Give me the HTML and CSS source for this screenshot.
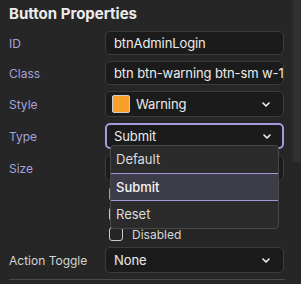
FILE: index.html
```html
<!DOCTYPE html>
<html lang="en">
<head>
    <meta charset="UTF-8">
    <title>Button Properties</title>
    <link rel="stylesheet" href="styles.css">
</head>
<body>
    <div class="panel">
        <h2 class="panel-title">Button Properties</h2>
        <div class="prop-row">
            <label class="prop-label">ID</label>
            <div class="field">btnAdminLogin</div>
        </div>
        <div class="prop-row">
            <label class="prop-label">Class</label>
            <div class="field">btn btn-warning btn-sm w-100</div>
        </div>
        <div class="prop-row">
            <label class="prop-label">Style</label>
            <div class="field select">
                <span class="swatch"></span>
                <span class="select-text">Warning</span>
                <svg class="chevron" width="8" height="5" viewBox="0 0 8 5"><path d="M1 1l3 3 3-3" fill="none" stroke="#f0f0f0" stroke-width="1.6" stroke-linecap="round" stroke-linejoin="round"/></svg>
            </div>
        </div>
        <div class="prop-row">
            <label class="prop-label">Type</label>
            <div class="select-wrap">
                <div class="field select focused">
                    <span class="select-text">Submit</span>
                    <svg class="chevron" width="8" height="5" viewBox="0 0 8 5"><path d="M1 1l3 3 3-3" fill="none" stroke="#f0f0f0" stroke-width="1.6" stroke-linecap="round" stroke-linejoin="round"/></svg>
                </div>
                <ul class="menu">
                    <li class="menu-item">Default</li>
                    <li class="menu-item active">Submit</li>
                    <li class="menu-item">Reset</li>
                </ul>
            </div>
        </div>
        <div class="prop-row">
            <label class="prop-label">Size</label>
            <div class="field select">
                <span class="select-text">Small</span>
                <svg class="chevron" width="8" height="5" viewBox="0 0 8 5"><path d="M1 1l3 3 3-3" fill="none" stroke="#f0f0f0" stroke-width="1.6" stroke-linecap="round" stroke-linejoin="round"/></svg>
            </div>
        </div>
        <div class="checks">
            <div class="check"><span class="box checked"></span>Full width</div>
            <div class="check"><span class="box"></span>Outline</div>
            <div class="check"><span class="box"></span>Disabled</div>
        </div>
        <div class="prop-row">
            <label class="prop-label plain">Action Toggle</label>
            <div class="field select">
                <span class="select-text">None</span>
                <svg class="chevron" width="8" height="5" viewBox="0 0 8 5"><path d="M1 1l3 3 3-3" fill="none" stroke="#f0f0f0" stroke-width="1.6" stroke-linecap="round" stroke-linejoin="round"/></svg>
            </div>
        </div>
        <div class="divider"></div>
    </div>
    <div class="scroll-track"><div class="scroll-thumb"></div></div>
</body>
</html>
```

FILE: styles.css
```css
body {
    margin: 0;
    height: 284px;
    overflow: hidden;
    display: flex;
    background: #262626;
    font-family: Inter, "Noto Sans", sans-serif;
    color: #e6e6e6;
}

.panel {
    flex: 1;
    padding: 4px 9px 0 9px;
    display: flex;
    flex-direction: column;
    gap: 6px;
}

.panel-title {
    margin: 0 0 1px;
    font-size: 15px;
    line-height: 20px;
    font-weight: 700;
    color: #ececec;
}

.prop-row {
    display: grid;
    grid-template-columns: 96px 1fr;
    align-items: center;
}

.prop-label {
    font-size: 12px;
    color: #a5a2dc;
}

.prop-label.plain {
    color: #d4d4d4;
}

.field {
    height: 24px;
    box-sizing: border-box;
    background: #1b1b1b;
    border: 1px solid #3b3b3b;
    border-radius: 5px;
    padding: 0 8px;
    font-size: 13px;
    line-height: 22px;
    letter-spacing: -0.1px;
    color: #ececec;
    white-space: nowrap;
    overflow: hidden;
}

.select {
    height: 26px;
    display: flex;
    align-items: center;
    gap: 6px;
}

.select-text {
    flex: 1;
}

.chevron {
    margin-right: 5px;
}

.swatch {
    width: 18px;
    height: 18px;
    box-sizing: border-box;
    background: #f89e2a;
    border: 1px solid #cfcfcf;
    border-radius: 2px;
    margin-left: -2px;
}

.focused {
    border: 2px solid #a09cdc;
    padding: 0 7px;
}

.focused .chevron {
    margin-right: 4px;
}

.select-wrap {
    position: relative;
}

.menu {
    position: absolute;
    top: 22px;
    left: 5px;
    width: 169px;
    box-sizing: border-box;
    margin: 0;
    padding: 0;
    list-style: none;
    background: #2b2b2b;
    border: 1px solid #484848;
    border-radius: 4px;
    z-index: 5;
}

.menu-item {
    height: 27px;
    line-height: 27px;
    padding: 0 5px;
    font-size: 13px;
    color: #dcdcdc;
}

.menu-item.active {
    background: #3d3c49;
    border-top: 1px solid #9e99da;
    border-bottom: 1px solid #9e99da;
    height: 26px;
    line-height: 26px;
    color: #f4f4f4;
    font-weight: 500;
}

.checks {
    display: flex;
    flex-direction: column;
    gap: 6px;
    padding-left: 100px;
}

.check {
    display: flex;
    align-items: center;
    gap: 9px;
    height: 14px;
    font-size: 12px;
    color: #d8d8d8;
}

.box {
    width: 14px;
    height: 14px;
    box-sizing: border-box;
    border: 1px solid #c8c8c8;
    border-radius: 3px;
}

.box.checked {
    background: #a09cdc;
    border-color: #a09cdc;
}

.divider {
    border-top: 1px solid #4a4a4a;
    margin-right: -1px;
}

.scroll-track {
    width: 8px;
}

.scroll-thumb {
    height: 162px;
    background: #303030;
}
```
